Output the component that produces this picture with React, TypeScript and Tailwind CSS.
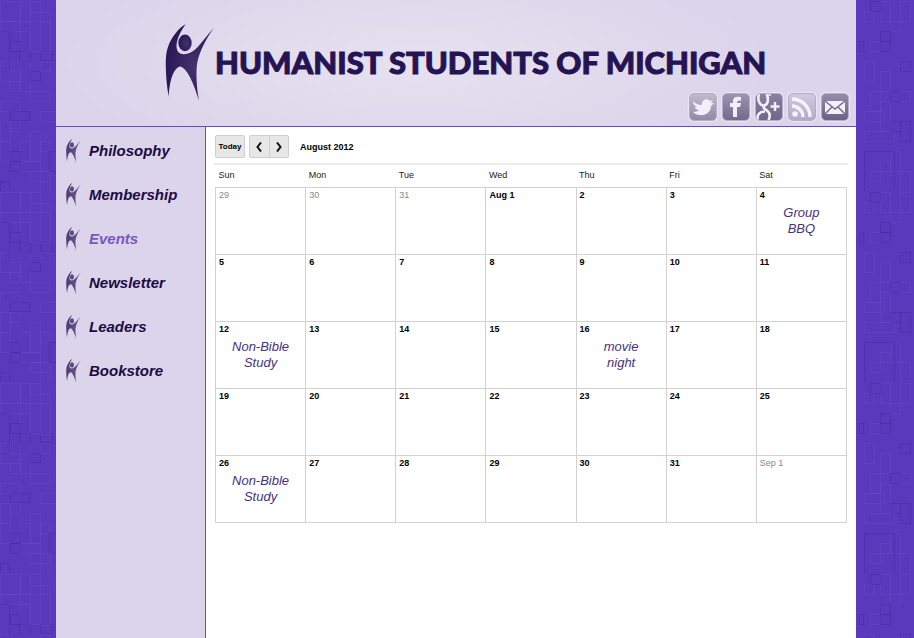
import { useId, type ReactNode } from "react";

const navItems = ["Philosophy", "Membership", "Events", "Newsletter", "Leaders", "Bookstore"];
const dayNames = ["Sun", "Mon", "Tue", "Wed", "Thu", "Fri", "Sat"];

type Day = { label: string; muted?: boolean; event?: [string, string] };

const study: [string, string] = ["Non-Bible", "Study"];

const weeks: Day[][] = [
  [
    { label: "29", muted: true },
    { label: "30", muted: true },
    { label: "31", muted: true },
    { label: "Aug 1" },
    { label: "2" },
    { label: "3" },
    { label: "4", event: ["Group", "BBQ"] },
  ],
  ["5", "6", "7", "8", "9", "10", "11"].map((label) => ({ label })),
  [
    { label: "12", event: study },
    { label: "13" },
    { label: "14" },
    { label: "15" },
    { label: "16", event: ["movie", "night"] },
    { label: "17" },
    { label: "18" },
  ],
  ["19", "20", "21", "22", "23", "24", "25"].map((label) => ({ label })),
  [
    { label: "26", event: study },
    { label: "27" },
    { label: "28" },
    { label: "29" },
    { label: "30" },
    { label: "31" },
    { label: "Sep 1", muted: true },
  ],
];

function Figure({ className }: { className: string }) {
  const id = useId();
  return (
    <svg viewBox="0 0 150 232" className={className} preserveAspectRatio="none" aria-hidden="true">
      <defs>
        <radialGradient id={id} cx="0.6" cy="0.55" r="0.6">
          <stop offset="0" stopColor="#44326c" />
          <stop offset="1" stopColor="#291858" />
        </radialGradient>
      </defs>
      <g fill={`url(#${id})`}>
        <path d="M62 1C42 11 19 41 10 66C1 90 2 114 3 145C4 172 8 200 11 219C13 185 20 137 44 128C66 129 88 184 102 231C95 190 92 145 97 115C103 84 124 42 147 11C124 35 102 70 82 83C64 94 46 94 38 82C29 65 38 34 62 1Z" />
        <ellipse cx="60" cy="57" rx="20" ry="25" />
      </g>
    </svg>
  );
}

/* Faint square outlines on a 10px grid, repeated down both page margins. */
const darkTiles = [
  [10, 41, 10, 10], [30, 71, 10, 9], [10, 111, 19, 9], [10, 151, 10, 10], [10, 161, 10, 10],
  [0, 181, 9, 10], [49, 151, 10, 20], [-1, 31, 10, 40], [19, 51, 11, 10], [40, 51, 12, 9],
  [110, 1, 10, 10], [120, 31, 10, 10], [120, 41, 10, 10], [99, 41, 4, 10], [130, 121, 10, 10],
  [140, 121, 10, 20], [104, 151, 30, 60], [130, 91, 10, 10], [140, 61, 10, 10],
];
const softTiles = [
  [0, 1, 20, 20], [20, 1, 10, 20], [30, 1, 10, 11], [40, 12, 10, 40], [0, 21, 20, 10],
  [20, 31, 10, 20], [30, 21, 20, 30], [0, 61, 10, 10], [0, 71, 20, 10], [10, 81, 10, 10],
  [20, 61, 10, 30], [40, 61, 10, 10], [30, 91, 20, 10], [0, 101, 20, 10], [40, 111, 20, 10],
  [0, 121, 10, 20], [10, 121, 10, 10], [20, 141, 10, 20], [30, 131, 10, 30], [40, 141, 10, 10],
  [20, 161, 20, 10], [30, 171, 20, 10], [0, 141, 10, 20], [40, 171, 10, 20],
  [104, 11, 10, 10], [120, 1, 10, 20], [130, 21, 10, 10], [110, 41, 10, 10], [104, 61, 10, 20],
  [120, 71, 10, 20], [140, 91, 10, 10], [110, 91, 10, 20], [104, 111, 20, 10], [104, 131, 30, 10],
  [130, 151, 10, 20], [120, 161, 10, 10], [110, 171, 10, 10], [140, 1, 10, 20], [120, 101, 10, 30],
  [140, 171, 10, 20],
];

function Texture() {
  return (
    <svg className="absolute inset-0 h-full w-full" aria-hidden="true">
      <defs>
        <pattern id="tiles" width="190" height="191" patternUnits="userSpaceOnUse">
          <g fill="none" stroke="#6a4ac8" strokeOpacity="0.35">
            {softTiles.map(([x, y, w, h]) => (
              <rect key={`${x}-${y}`} x={x + 0.5} y={y + 0.5} width={w} height={h} />
            ))}
          </g>
          <g fill="none" stroke="#43259b" strokeOpacity="0.36">
            {darkTiles.map(([x, y, w, h]) => (
              <rect key={`${x}-${y}`} x={x + 0.5} y={y + 0.5} width={w} height={h} />
            ))}
          </g>
        </pattern>
      </defs>
      <rect width="100%" height="100%" fill="url(#tiles)" />
    </svg>
  );
}

function SocialLink({ label, tone, children }: { label: string; tone: string; children: ReactNode }) {
  return (
    <a
      href="#"
      aria-label={label}
      className={`block size-7 overflow-hidden rounded-[5px] border border-[#b5adc6] bg-linear-to-b shadow-[0_0_1px_1px_#ebe5f3] ${tone}`}
    >
      <svg viewBox="0 0 26 26" className="size-full" fill="none" stroke="none">
        {children}
      </svg>
    </a>
  );
}

export default function App() {
  return (
    <div className="relative min-h-screen bg-[#5b39bd] pr-[2px] font-['Liberation_Sans',Arial,sans-serif]">
      <Texture />
      <div className="relative mx-auto flex min-h-screen max-w-[800px] flex-col bg-[#dcd4eb]">
        <header className="flex h-[127px] flex-col border-b border-[#6849c4] bg-[radial-gradient(ellipse_360px_110px_at_45%_50%,#e6e1ef,#dcd4eb)]">
          <div className="flex h-[93px] items-start pt-6 pl-[109px]">
            <Figure className="h-[77px] w-[50px] shrink-0" />
            <h1 className="pt-4 text-[31px] leading-[44px] font-black whitespace-nowrap text-[#251453] [-webkit-text-stroke:1px_#251453] font-['Lato','Liberation_Sans',sans-serif]">
              HUMANIST STUDENTS OF MICHIGAN
            </h1>
          </div>
          <div className="flex justify-end gap-[5px] pr-[7px]">
            <SocialLink label="Twitter" tone="from-[#c2bacf] to-[#9289a6]">
              <path
                fill="#f3eff9"
                d="M3 7C6 10 9 11 12 11C11 6 17 3 20 7L23 6L21 9L24 9L21 12C21 18 15 22 10 21C7 21 5 20 3 18C6 18 8 17 9 16C6 16 5 14 5 13H7C4 12 3 9 3 7Z"
              />
            </SocialLink>
            <SocialLink label="Facebook" tone="from-[#9d94b1] to-[#746a8b]">
              <path
                fill="#f3eff9"
                d="M10 23V13H7V9H10V7C10 3 13 2 18 3V7C15 6 14 7 14 9H18L17 13H14V23Z"
              />
            </SocialLink>
            <SocialLink label="Google Plus" tone="from-[#8b819f] to-[#70668a]">
              <g stroke="#f3eff9">
                <path
                  strokeWidth="2.6"
                  d="M3 0C1 6 4 12 8 11.500C12 11 13 5 10.500 0M9 11.500C6 14 9 15 11.500 17C15 20 14 23 12.500 26M2 26C0 21 4 17.500 9 17.500"
                />
                <path d="M10 1H15" strokeWidth="1.600" />
                <path d="M19 8V17M14.500 12.500H23.500" strokeWidth="2.400" />
              </g>
            </SocialLink>
            <SocialLink label="RSS feed" tone="from-[#d2c9e1] to-[#b3aac6]">
              <circle cx="6" cy="20" r="2.8" fill="#f6f2fb" />
              <path d="M3 12C9 12 14 17 14 23M3 5C13 5 21 13 21 23" stroke="#f6f2fb" strokeWidth="3.400" />
            </SocialLink>
            <SocialLink label="Email" tone="from-[#958ba9] to-[#6b6184]">
              <path fill="#f3eff9" d="M3 7H23V20H3Z" />
              <path d="M3 7L13 15L23 7M3 20L10 13M23 20L16 13" stroke="#776d8e" strokeWidth="1.500" />
            </SocialLink>
          </div>
        </header>

        <div className="flex flex-1">
          <nav className="w-[150px] shrink-0 border-r border-[#6849c4] pt-[2px]">
            <ul>
              {navItems.map((item) => (
                <li key={item}>
                  <a
                    href="#"
                    aria-current={item === "Events" ? "page" : undefined}
                    className={`flex h-11 items-center gap-2 pl-[10px] text-[15px] font-bold italic ${
                      item === "Events" ? "text-[#7659bd]" : "text-[#1b0b43]"
                    }`}
                  >
                    <Figure className="h-6 w-[15px] opacity-80" />
                    {item}
                  </a>
                </li>
              ))}
            </ul>
          </nav>

          <main className="min-w-0 flex-1 bg-white px-2 pt-2">
            <div className="flex h-[30px] items-start border-b-2 border-[#ededed] pl-px text-[9px] font-bold text-black">
              <button className="h-[23px] w-[30px] rounded-[2px] border border-[#cfcfcf] bg-[#e7e7e7] text-[8px]">
                Today
              </button>
              <div className="ml-1 flex h-[23px] w-10 rounded-[2px] border border-[#cfcfcf] bg-[#e7e7e7]">
                <button aria-label="Previous month" className="flex flex-1 items-center justify-center border-r border-[#cfcfcf]">
                  <svg viewBox="0 0 6 10" className="h-[10px] w-[6px]" fill="none" stroke="#111" strokeWidth="2">
                    <path d="M5 0.5L1.5 5L5 9.5" />
                  </svg>
                </button>
                <button aria-label="Next month" className="flex flex-1 items-center justify-center">
                  <svg viewBox="0 0 6 10" className="h-[10px] w-[6px]" fill="none" stroke="#111" strokeWidth="2">
                    <path d="M1 0.5L4.5 5L1 9.5" />
                  </svg>
                </button>
              </div>
              <h2 className="ml-[11px] leading-6">August 2012</h2>
            </div>
            <div className="pr-px pl-px">
              <table className="w-full table-fixed border-collapse text-[9px] text-black">
                <thead>
                  <tr className="h-[22px]">
                    {dayNames.map((name) => (
                      <th key={name} scope="col" className="p-0 pl-[3px] text-left font-normal text-[#222]">
                        {name}
                      </th>
                    ))}
                  </tr>
                </thead>
                <tbody>
                  {weeks.map((week, row) => (
                    <tr key={row} className="h-[67px]">
                      {week.map((day) => (
                        <td key={day.label} className="border border-[#d2d2d2] p-0 align-top">
                          <div className={`pl-[3px] leading-[14px] ${day.muted ? "text-[#888]" : "font-bold"}`}>
                            {day.label}
                          </div>
                          {day.event && (
                            <p className="mt-[3px] text-center text-[13px] leading-4 text-[#463083] italic">
                              {day.event[0]}
                              <br />
                              {day.event[1]}
                            </p>
                          )}
                        </td>
                      ))}
                    </tr>
                  ))}
                </tbody>
              </table>
            </div>
          </main>
        </div>
      </div>
    </div>
  );
}
